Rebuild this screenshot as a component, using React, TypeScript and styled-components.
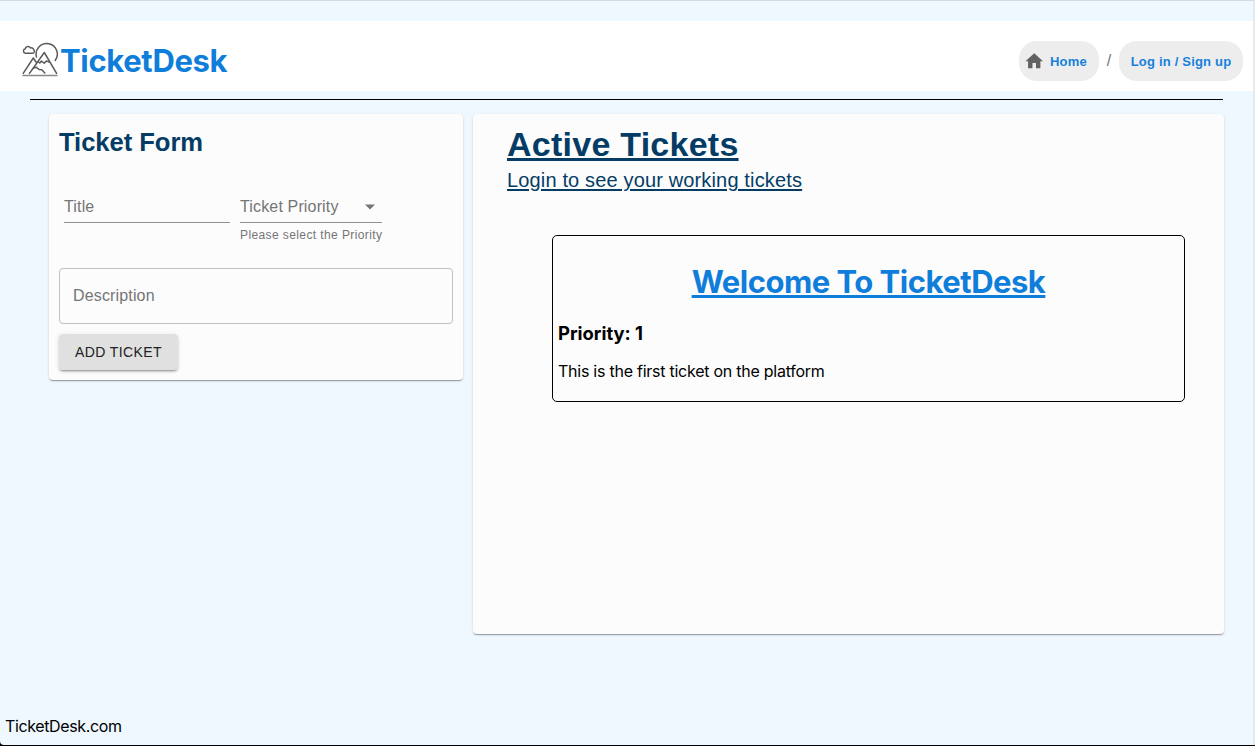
import React from "react";
import styled, { createGlobalStyle } from "styled-components";

const sans = '"Liberation Sans", Arial, sans-serif';
const system = "Inter, sans-serif";

const GlobalStyle = createGlobalStyle`
  * { box-sizing: border-box; }
  body { margin: 0; background: #000; overflow: hidden; }
  h1, h2, h3, p { margin: 0; }
`;

const Page = styled.div`
  height: 745px;
  display: flex;
  flex-direction: column;
  background: #eff7ff;
  border-top: 1px solid #d6dae0;
  border-right: 2px solid #e6eaef;
  border-bottom-left-radius: 4px;
  padding-top: 20px;
  font-family: ${system};
  color: #000;
`;

const Header = styled.header`
  height: 70px;
  flex: none;
  background: #fff;
  display: flex;
  align-items: center;
  justify-content: space-between;
  padding: 10px 10px 0 22px;
`;

const Brand = styled.div`
  display: flex;
  align-items: flex-start;
  color: #0f7edb;
`;

const BrandName = styled.h1`
  font: 700 31px/40px ${system};
  letter-spacing: -0.35px;
  margin: 0 0 1px 2px;
`;

const Nav = styled.nav`
  display: flex;
  align-items: center;
  font: 16px/24px ${sans};
  color: #757575;
`;

const Slash = styled.span`
  width: 20px;
  text-align: center;
`;

const Pill = styled.a<{ $width: number; $withIcon?: boolean }>`
  width: ${(p) => p.$width}px;
  height: 40px;
  padding-right: ${(p) => (p.$withIcon ? 6 : 0)}px;
  border-radius: 18px;
  background: #ededed;
  color: #1681db;
  display: flex;
  align-items: center;
  justify-content: center;
  gap: 7px;
  font: 700 13px/20px ${sans};
  letter-spacing: 0.2px;
  white-space: nowrap;
`;

const PillLabel = styled.span`
  padding-top: 2px;
`;

const Rule = styled.hr`
  width: 1193px;
  height: 1px;
  flex: none;
  border: 0;
  background: #000;
  margin: 8px 0 14px 30px;
`;

const Columns = styled.main`
  display: flex;
  align-items: flex-start;
  gap: 10px;
  padding-left: 49px;
  flex: 1;
`;

const Card = styled.section<{ $width: number; $height: number }>`
  width: ${(p) => p.$width}px;
  height: ${(p) => p.$height}px;
  background: #fcfcfc;
  border-radius: 4px;
  box-shadow: 0 2px 1px -1px rgba(0, 0, 0, 0.2), 0 1px 1px 0 rgba(0, 0, 0, 0.14),
    0 1px 3px 0 rgba(0, 0, 0, 0.12);
`;

const FormCard = styled(Card)`
  padding: 10px;
  font-family: ${sans};
`;

const FormTitle = styled.h2`
  font: 700 25.6px/36px ${sans};
  letter-spacing: -0.05px;
  color: #043c66;
`;

const Fields = styled.div`
  display: flex;
  gap: 10px;
  padding: 33px 5px 0;
  height: 108px;
`;

const Field = styled.div<{ $width: number }>`
  width: ${(p) => p.$width}px;
  white-space: nowrap;
`;

const FieldInput = styled.div`
  height: 30px;
  border-bottom: 1px solid #919191;
  display: flex;
  justify-content: space-between;
  align-items: center;
  padding: 0 6px 2px 0;
  font-size: 16px;
  letter-spacing: 0.15px;
  color: #757575;
`;

const Helper = styled.div`
  margin-top: 4px;
  font-size: 12px;
  line-height: 16px;
  letter-spacing: 0.4px;
  color: #757575;
`;

const Description = styled.div`
  height: 56px;
  border: 1px solid #c0c0c0;
  border-radius: 4px;
  padding: 0 13px;
  font-size: 16px;
  line-height: 53px;
  letter-spacing: 0.15px;
  color: #757575;
`;

const AddButton = styled.button`
  display: block;
  width: 119px;
  height: 36px;
  margin-top: 10px;
  padding: 0;
  border: 0;
  border-radius: 4px;
  background: #e0e0e0;
  color: #212121;
  font: 14px/24px ${sans};
  letter-spacing: 0.4px;
  box-shadow: 0 3px 1px -2px rgba(0, 0, 0, 0.2), 0 2px 2px 0 rgba(0, 0, 0, 0.14),
    0 1px 5px 0 rgba(0, 0, 0, 0.12);
`;

const TicketsCard = styled(Card)`
  padding: 9px 39px 0 34px;
`;

const TicketsTitle = styled.h2`
  font: 700 34px/42px ${sans};
  letter-spacing: 0.25px;
  color: #043c66;
  text-decoration: underline 3px;
  text-underline-offset: 2px;
`;

const LoginHint = styled.p`
  font: 20px/30px ${sans};
  letter-spacing: 0.15px;
  color: #043c66;
  text-decoration: underline 2px;
  text-underline-offset: 2px;
`;

const Ticket = styled.article`
  margin: 40px 0 0 45px;
  height: 167px;
  border: 1px solid #000;
  border-radius: 5px;
  padding: 26px 5px 0;
`;

const TicketTitle = styled.h1`
  font: 700 31px/40px ${system};
  letter-spacing: -0.5px;
  text-align: center;
  color: #0f7edb;
  text-decoration: underline 3px;
  text-underline-offset: 2px;
`;

const Priority = styled.h3`
  margin-top: 19px;
  font: 700 18.4px/24px ${system};
`;

const TicketText = styled.p`
  margin-top: 16px;
  font: 16px/20px ${system};
  letter-spacing: -0.25px;
`;

const Footer = styled.footer`
  padding: 0 0 9px 5px;
  font: 16px/20px ${system};
  letter-spacing: -0.37px;
`;

const MountainLogo = () => (
  <svg width="36" height="36" viewBox="0 0 36 36" fill="none" stroke="#5a5a5a" strokeWidth="1.5" strokeLinejoin="round" strokeLinecap="round">
    <path d="M14.5 16A10.6 10.6 0 1 1 33.2 19.5" />
    <path d="M3.3 12.2A2.3 2.3 0 0 1 3.3 7.7C3.5 5.3 7.4 4.7 8.4 7C10.2 6.5 11.5 7.3 11.4 8.4C13 9 12.5 12.2 11 12.2Z" />
    <path d="M1.2 32.4L11.3 17L14 21M7.5 32.4L22.3 11.5L34.6 32.4" />
    <path d="M16 20.5L17.8 22L19.5 20L22.2 22.3L24.4 19.9L27 21.2M11.2 27.4L14 26.2L17 28.4L19.8 28.8L22.8 32" />
    <path d="M1 34.6H35" stroke="#888" />
  </svg>
);

const HomeIcon = () => (
  <svg width="18" height="18" viewBox="1.5 1.5 20.5 20.5" fill="#616161">
    <path d="M10 20v-6h4v6h5v-8h3L12 3 2 12h3v8z" />
  </svg>
);

const Arrow = () => (
  <svg width="12" height="6" viewBox="0 0 12 6" fill="#757575">
    <path d="M1 .5h10L6 5.5z" />
  </svg>
);

export default function App() {
  return (
    <>
      <GlobalStyle />
      <Page>
        <Header>
          <Brand>
            <MountainLogo />
            <BrandName>TicketDesk</BrandName>
          </Brand>
          <Nav>
            <Pill $width={80} $withIcon>
              <HomeIcon />
              <PillLabel>Home</PillLabel>
            </Pill>
            <Slash>/</Slash>
            <Pill $width={124}>
              <PillLabel>Log in / Sign up</PillLabel>
            </Pill>
          </Nav>
        </Header>
        <Rule />
        <Columns>
          <FormCard $width={414} $height={266}>
            <FormTitle>Ticket Form</FormTitle>
            <Fields>
              <Field $width={166}>
                <FieldInput>Title</FieldInput>
              </Field>
              <Field $width={142}>
                <FieldInput>
                  Ticket Priority
                  <Arrow />
                </FieldInput>
                <Helper>Please select the Priority</Helper>
              </Field>
            </Fields>
            <Description>Description</Description>
            <AddButton>ADD TICKET</AddButton>
          </FormCard>
          <TicketsCard $width={751} $height={520}>
            <TicketsTitle>Active Tickets</TicketsTitle>
            <LoginHint>Login to see your working tickets</LoginHint>
            <Ticket>
              <TicketTitle>Welcome To TicketDesk</TicketTitle>
              <Priority>Priority: 1</Priority>
              <TicketText>This is the first ticket on the platform</TicketText>
            </Ticket>
          </TicketsCard>
        </Columns>
        <Footer>TicketDesk.com</Footer>
      </Page>
    </>
  );
}
